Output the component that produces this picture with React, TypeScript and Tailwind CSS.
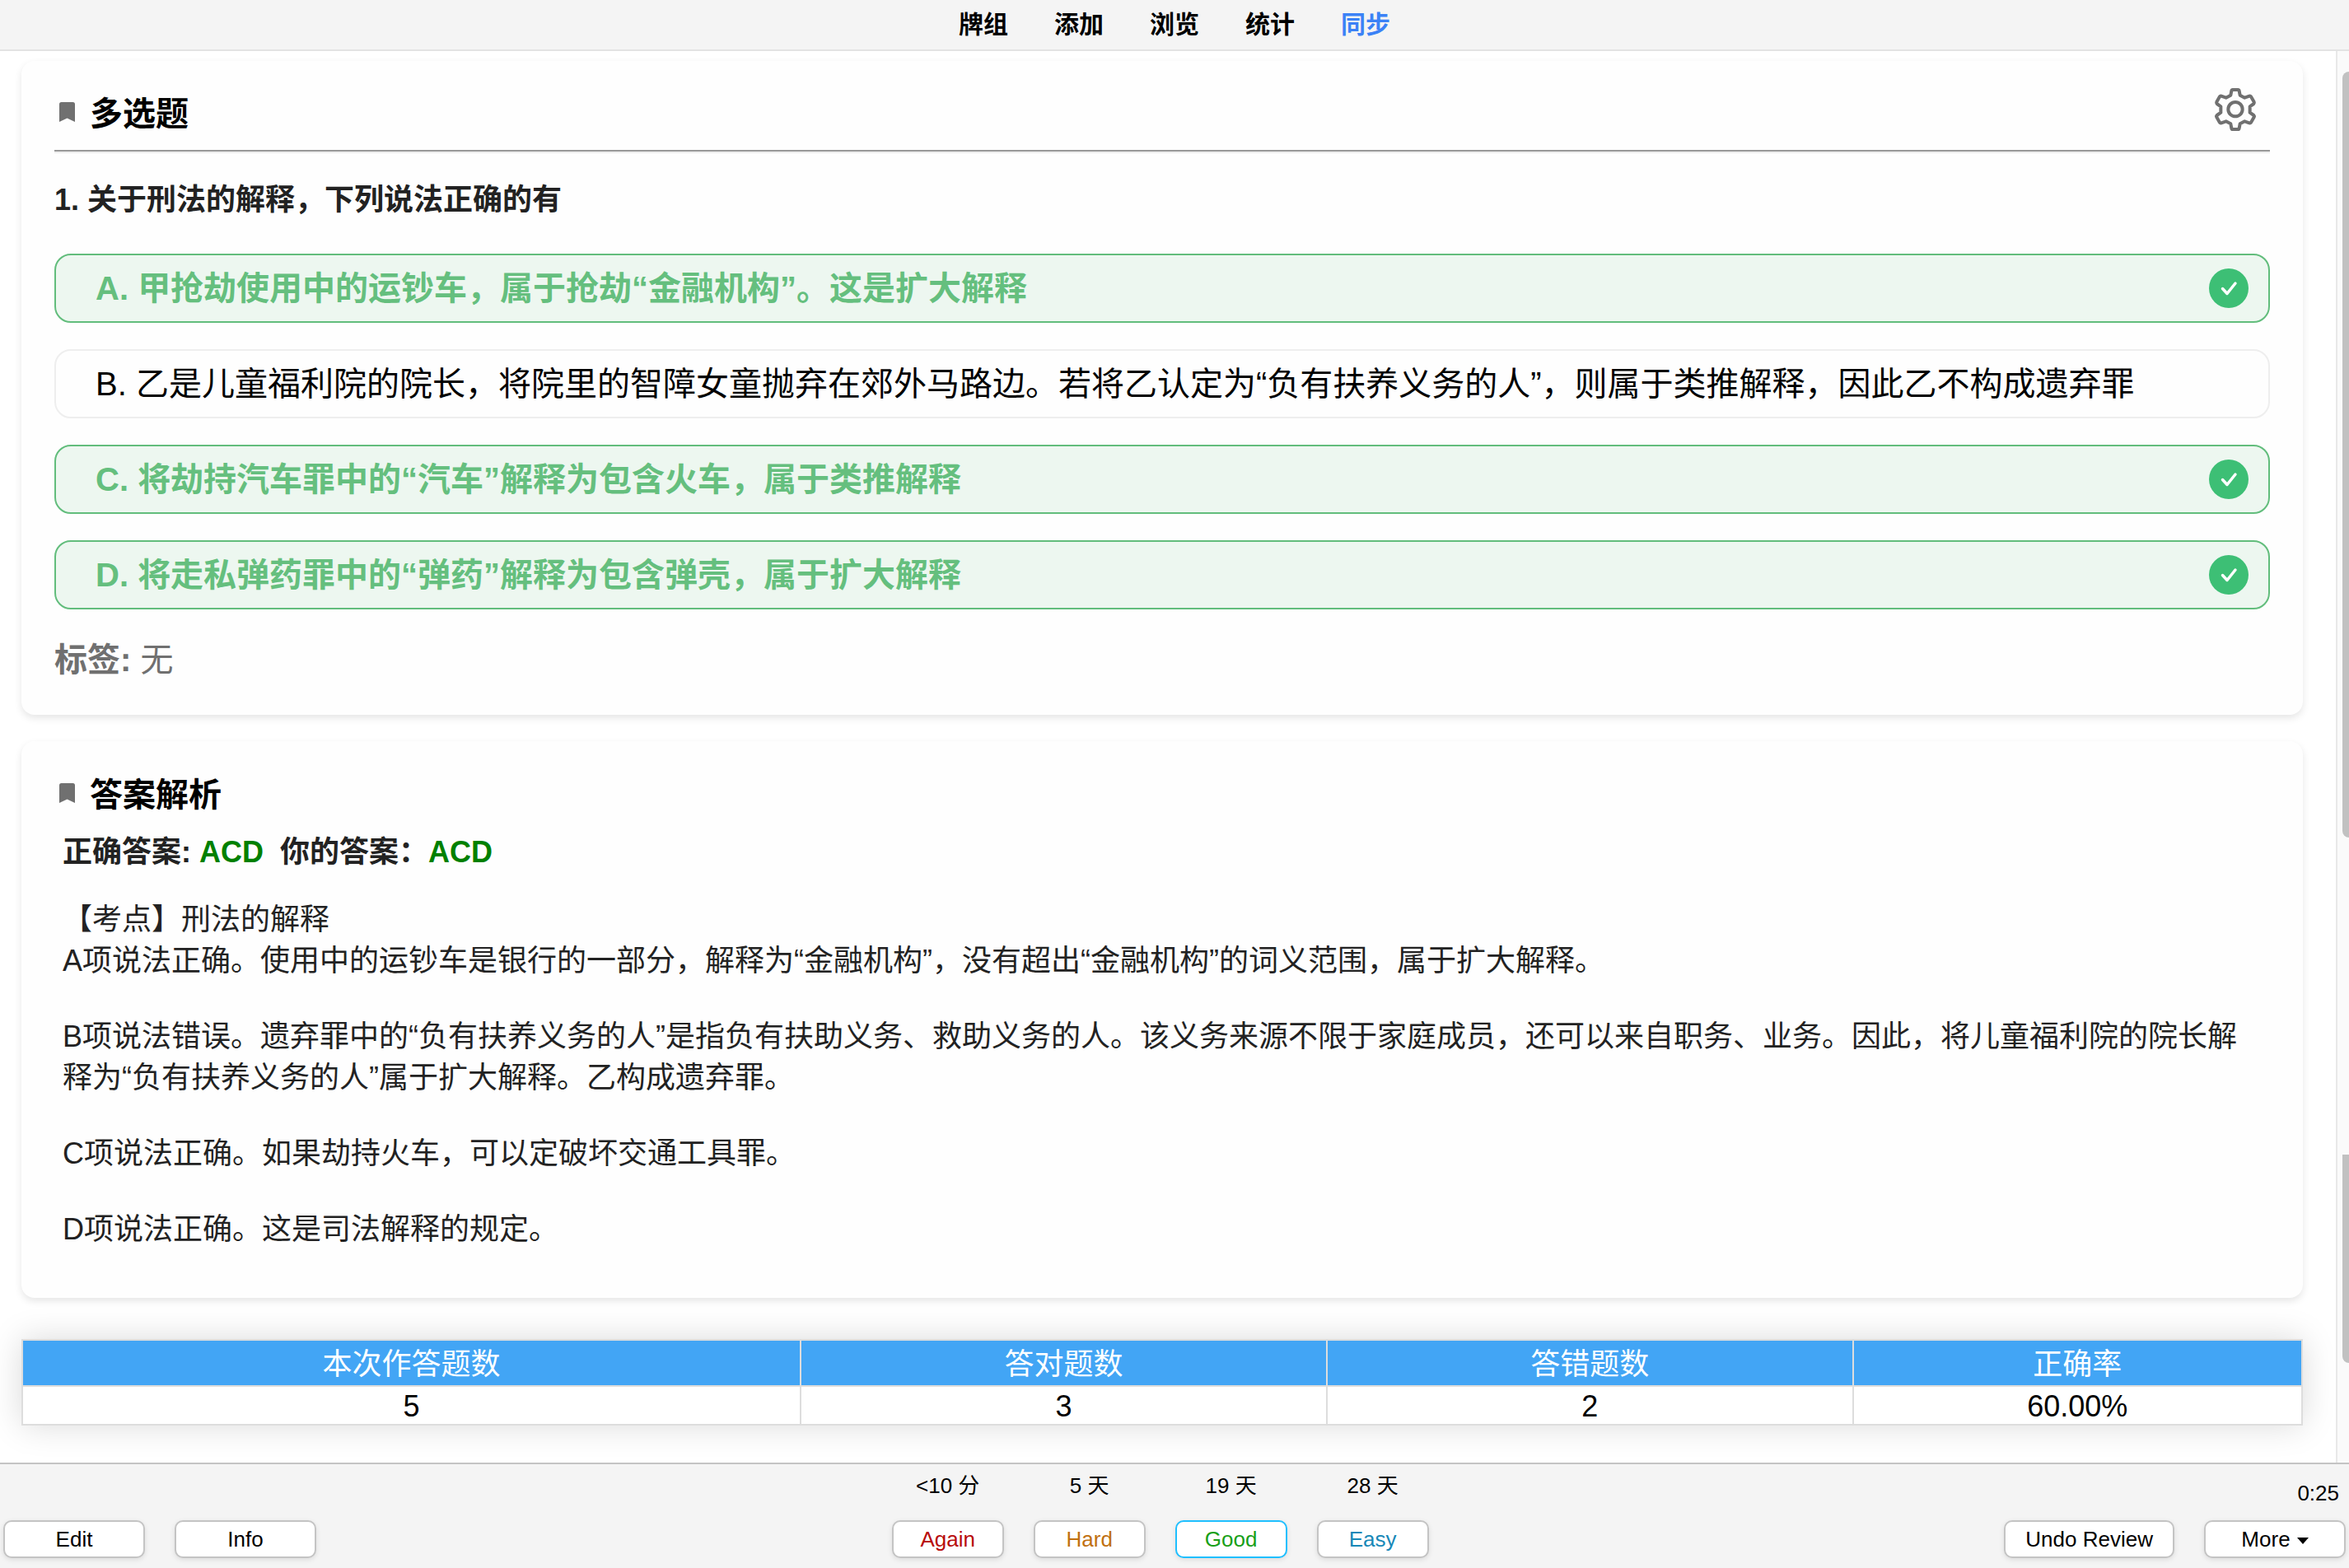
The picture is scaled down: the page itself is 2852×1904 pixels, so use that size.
import clsx from "clsx";

interface Option {
  key: string;
  text: string;
  correct: boolean;
}

const NAV_ITEMS = [
  { label: "牌组", active: false },
  { label: "添加", active: false },
  { label: "浏览", active: false },
  { label: "统计", active: false },
  { label: "同步", active: true },
];

const OPTIONS: Option[] = [
  {
    key: "A",
    text: "甲抢劫使用中的运钞车，属于抢劫“金融机构”。这是扩大解释",
    correct: true,
  },
  {
    key: "B",
    text: "乙是儿童福利院的院长，将院里的智障女童抛弃在郊外马路边。若将乙认定为“负有扶养义务的人”，则属于类推解释，因此乙不构成遗弃罪",
    correct: false,
  },
  {
    key: "C",
    text: "将劫持汽车罪中的“汽车”解释为包含火车，属于类推解释",
    correct: true,
  },
  {
    key: "D",
    text: "将走私弹药罪中的“弹药”解释为包含弹壳，属于扩大解释",
    correct: true,
  },
];

const STATS = [
  { label: "本次作答题数", value: "5" },
  { label: "答对题数", value: "3" },
  { label: "答错题数", value: "2" },
  { label: "正确率", value: "60.00%" },
];

const EASES = [
  { label: "Again", due: "<10 分", className: "border-[#c4c4c4] text-[#b80c0c]" },
  { label: "Hard", due: "5 天", className: "border-[#c4c4c4] text-[#c07010]" },
  { label: "Good", due: "19 天", className: "border-[#1fbfff] text-[#18a018]" },
  { label: "Easy", due: "28 天", className: "border-[#c4c4c4] text-[#1888b8]" },
];

const BookmarkIcon = () => (
  <svg
    viewBox="0 0 19 24"
    className="mb-1 h-6 w-[19px] shrink-0"
    aria-hidden="true"
  >
    <path
      d="M2.5 0h14A2.5 2.5 0 0 1 19 2.5V24l-9.500-4.500L0 24V2.500A2.500 2.500 0 0 1 2.500 0Z"
      fill="#707070"
    />
  </svg>
);

const GearIcon = () => (
  <svg
    viewBox="0 0 180 186"
    className="h-[62px] w-[60px]"
    fill="none"
    stroke="#707070"
    strokeWidth="12"
    strokeLinejoin="round"
    aria-hidden="true"
  >
    <path d="M80 21H100Q103 21 104 25L107 41L124 50L141 44Q145 43 147 46L158 65Q160 69 157 72L143 82V104L157 114Q160 117 158 121L147 140Q145 143 141 142L124 136L107 145L104 161Q103 165 100 165H80Q77 165 76 161L73 145L56 136L39 142Q35 143 33 140L22 121Q20 117 23 114L37 104V82L23 72Q20 69 22 65L33 46Q35 43 39 44L56 50L73 41L76 25Q77 21 80 21Z" />
    <circle cx="90" cy="92" r="26" />
  </svg>
);

const CheckBadge = () => (
  <svg viewBox="0 0 48 48" className="size-12 shrink-0" aria-hidden="true">
    <circle cx="24" cy="24" r="24" fill="#3dbf75" />
    <path
      d="M16.500 24.500L22 30.500L32 18"
      fill="none"
      stroke="#fff"
      strokeWidth="3.500"
      strokeLinecap="round"
      strokeLinejoin="round"
    />
  </svg>
);

const SectionTitle = ({ title }: { title: string }) => (
  <h2 className="flex items-center gap-[18px] pl-[6px] text-[40px] leading-[50px] font-bold text-black">
    <BookmarkIcon />
    {title}
  </h2>
);

const Card = ({
  className,
  children,
}: {
  className?: string;
  children: React.ReactNode;
}) => (
  <section
    className={clsx(
      "rounded-2xl bg-[#fefefe] px-10 shadow-[0_4px_10px_rgba(0,0,0,0.1)]",
      className
    )}
  >
    {children}
  </section>
);

const OptionRow = ({ option }: { option: Option }) => (
  <button
    type="button"
    aria-pressed={option.correct}
    className={clsx(
      "flex h-[84px] w-full items-center justify-between rounded-[20px] border-2 pr-6 pl-12 text-left text-[40px] leading-[50px]",
      option.correct
        ? "border-[#62bd7c] bg-[#edf7f0] font-bold text-[#65bf7e]"
        : "border-[#eeeeee] text-black"
    )}
  >
    <span>
      {option.key}. {option.text}
    </span>
    {option.correct && <CheckBadge />}
  </button>
);

const BarButton = ({
  className,
  children,
}: {
  className?: string;
  children: React.ReactNode;
}) => (
  <button
    type="button"
    className={clsx(
      "flex h-[46px] items-center justify-center gap-2 rounded-[10px] border-2 bg-white text-[26px] leading-8 shadow-[0_2px_6px_rgba(0,0,0,0.1)]",
      className
    )}
  >
    {children}
  </button>
);

const ScrollTrack = () => (
  <div className="flex w-4 shrink-0 flex-col items-end border-l-2 border-[#e8e8e8] bg-[#fafafa] pt-[25px]">
    <div className="h-[930px] w-2 rounded-l-lg bg-[#c1c1c1]" />
    <div className="mt-[385px] h-[253px] w-2 rounded-bl-lg bg-[#c1c1c1]" />
  </div>
);

const App = () => {
  return (
    <div className="flex min-h-screen flex-col bg-white font-['Liberation_Sans','Noto_Sans_CJK_SC',sans-serif] text-black">
      <nav className="flex h-[62px] items-center justify-center gap-14 border-b-2 border-[#e3e3e3] bg-[#f4f4f4] text-[30px] leading-10 font-bold">
        {NAV_ITEMS.map((item) => (
          <a
            key={item.label}
            href="#"
            className={item.active ? "text-[#3b82f6]" : "text-black"}
          >
            {item.label}
          </a>
        ))}
      </nav>

      <div className="flex flex-1">
        <main className="min-w-0 flex-1 overflow-hidden pt-3 pr-10 pb-[45px] pl-[26px]">
          <Card className="pt-7 pb-[42px]">
            <div className="flex items-center justify-between border-b-2 border-[#999999] pb-[18px] shadow-[0_2px_0_#eeeeee]">
              <div className="pt-[10px]">
                <SectionTitle title="多选题" />
              </div>
              <button type="button" aria-label="设置" className="mr-3">
                <GearIcon />
              </button>
            </div>

            <p className="mt-[34px] text-[36px] leading-[50px] font-bold text-[#222222]">
              1. 关于刑法的解释，下列说法正确的有
            </p>

            <div className="mt-10 flex flex-col gap-8">
              {OPTIONS.map((option) => (
                <OptionRow key={option.key} option={option} />
              ))}
            </div>

            <p className="mt-9 text-[40px] leading-[50px] text-[#707070]">
              <b>标签:</b> 无
            </p>
          </Card>

          <Card className="mt-8 pt-10 pb-[58px]">
            <SectionTitle title="答案解析" />

            <div className="px-[10px] text-[36px] leading-[50px] text-[#222222]">
              <p className="mt-5 font-bold whitespace-pre">
                正确答案: <span className="text-[#008000]">ACD</span>
                {"  "}你的答案：<span className="text-[#008000]">ACD</span>
              </p>

              <div className="mt-8 flex flex-col gap-[42px]">
                <p>
                  【考点】刑法的解释
                  <br />
                  A项说法正确。使用中的运钞车是银行的一部分，解释为“金融机构”，没有超出“金融机构”的词义范围，属于扩大解释。
                </p>
                <p>
                  B项说法错误。遗弃罪中的“负有扶养义务的人”是指负有扶助义务、救助义务的人。该义务来源不限于家庭成员，还可以来自职务、业务。因此，将儿童福利院的院长解释为“负有扶养义务的人”属于扩大解释。乙构成遗弃罪。
                </p>
                <p>C项说法正确。如果劫持火车，可以定破坏交通工具罪。</p>
                <p>D项说法正确。这是司法解释的规定。</p>
              </div>
            </div>
          </Card>

          <table className="mt-[50px] w-full border-collapse bg-white text-center text-[36px] shadow-[0_0_40px_rgba(0,0,0,0.15)]">
            <thead>
              <tr className="bg-[#42a5f5] text-white">
                {STATS.map((stat) => (
                  <th
                    key={stat.label}
                    className="h-14 border-2 border-[#dddddd] px-[2px] pt-1 leading-[50px] font-normal"
                  >
                    {stat.label}
                  </th>
                ))}
              </tr>
            </thead>
            <tbody>
              <tr>
                {STATS.map((stat) => (
                  <td
                    key={stat.label}
                    className="h-[47px] border-2 border-[#dddddd] px-[2px] pt-[2px] leading-[42px]"
                  >
                    {stat.value}
                  </td>
                ))}
              </tr>
            </tbody>
          </table>
        </main>
        <ScrollTrack />
      </div>

      <footer className="flex h-32 items-end justify-between border-t-2 border-[#c4c4c4] bg-[#f4f4f4] px-1 pb-3 text-[26px] leading-8">
        <div className="flex gap-9">
          <BarButton className="w-[172px] border-[#c4c4c4]">Edit</BarButton>
          <BarButton className="w-[172px] border-[#c4c4c4]">Info</BarButton>
        </div>

        <div className="flex gap-9">
          {EASES.map((ease) => (
            <div key={ease.label} className="flex flex-col items-center gap-[26px]">
              <span>{ease.due}</span>
              <BarButton className={clsx("w-[136px]", ease.className)}>
                {ease.label}
              </BarButton>
            </div>
          ))}
        </div>

        <div className="flex flex-col items-end gap-[17px]">
          <span className="pr-2">0:25</span>
          <div className="flex gap-9">
            <BarButton className="border-[#c4c4c4] px-6">Undo Review</BarButton>
            <BarButton className="w-[172px] border-[#c4c4c4]">
              More
              <svg viewBox="0 0 14 8" className="mt-1 h-2 w-[14px]" aria-hidden="true">
                <path d="M0 0H14L7 8Z" fill="#000" />
              </svg>
            </BarButton>
          </div>
        </div>
      </footer>
    </div>
  );
};

export default App;
